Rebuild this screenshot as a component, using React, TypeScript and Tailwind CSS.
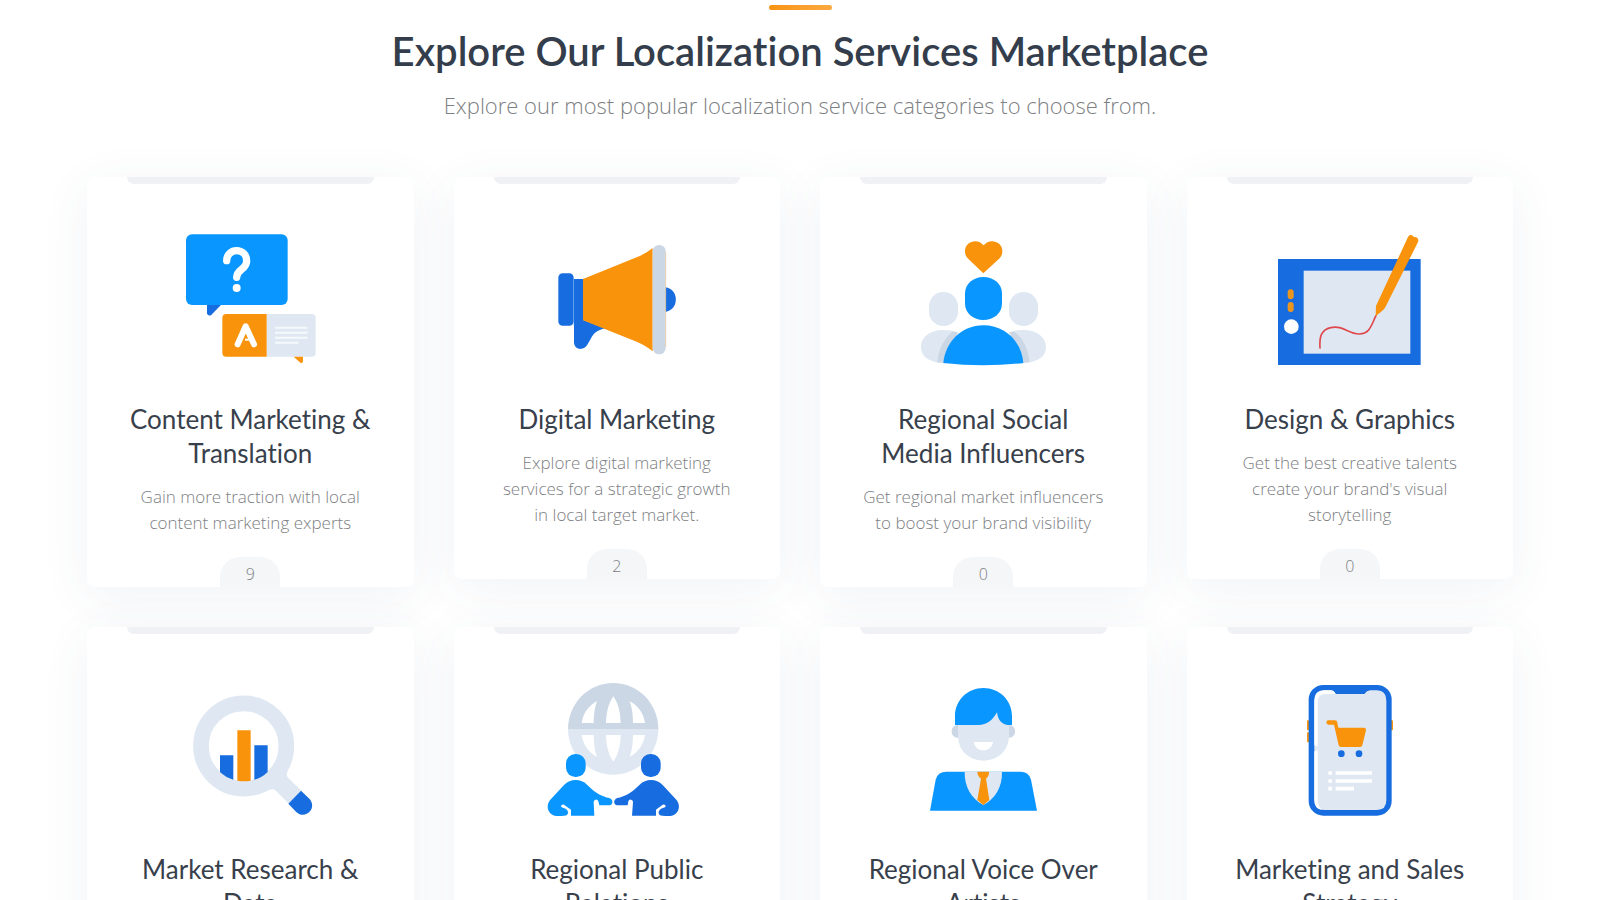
import type { ReactNode } from "react";

interface Service {
  title: string;
  description: string;
  count: number;
  icon: ReactNode;
}

const BLUE = "#0a96ff";
const DARK_BLUE = "#176ddf";
const ORANGE = "#f8930b";
const PALE = "#dfe8f2";
const GREY = "#cbd7e4";

interface IconProps {
  viewBox: string;
  children: ReactNode;
}

function Icon({ viewBox, children }: IconProps) {
  return (
    <svg className="w-[200px] h-40" viewBox={viewBox} fill="none" aria-hidden="true">
      {children}
    </svg>
  );
}

function TranslationIcon() {
  return (
    <Icon viewBox="270 210 600 480">
      <path d="M441 460V490Q443 499 453 496L488 460Z" fill={DARK_BLUE} />
      <rect x="378" y="253" width="305" height="212" rx="18" fill={BLUE} />
      <path
        d="M500 332C500 292 560 292 560 333C560 359 530 357 530 382"
        stroke="white"
        strokeWidth="22"
        strokeLinecap="round"
      />
      <circle cx="530" cy="414" r="12" fill="white" />
      <path d="M620 492H755Q767 492 767 504V608Q767 620 755 620H620Z" fill={PALE} />
      <path d="M620 492H499Q487 492 487 504V608Q487 620 499 620H620Z" fill={ORANGE} />
      <path d="M701 620H729V634Q728 641 721 638Z" fill={ORANGE} />
      <path
        d="M533 583L557 529L582 583"
        stroke="white"
        strokeWidth="18"
        strokeLinecap="round"
        strokeLinejoin="round"
      />
      <path d="M555 569H568" stroke="white" strokeWidth="6" />
      <path d="M645 533H742M645 548H742M645 563H742M645 578H716" stroke="#f6f9fc" strokeWidth="6" />
    </Icon>
  );
}

function MegaphoneIcon() {
  return (
    <Icon viewBox="-9 0 600 480">
      <path d="M436 202C478 207 478 270 436 276Z" fill={DARK_BLUE} />
      <path
        d="M162 177H190V300L256 325C231 331 220 340 212 357L201 376C190 393 162 390 162 366Z"
        fill={DARK_BLUE}
      />
      <rect x="115" y="160" width="46" height="157" rx="13" fill={DARK_BLUE} />
      <path d="M161 177V317" stroke="#5b98e9" strokeWidth="1" />
      <path d="M189 177L350 112Q378 101 398 84V394Q380 378 350 365L189 301Z" fill={ORANGE} />
      <rect x="398" y="75" width="39" height="328" rx="19" fill={GREY} />
      <path d="M437 96V382" stroke="#eec690" strokeWidth="2" />
    </Icon>
  );
}

function InfluencersIcon() {
  return (
    <Icon viewBox="-21 0 600 480">
      <rect x="117" y="216" width="87" height="102" rx="43" fill={PALE} />
      <rect x="357" y="216" width="87" height="102" rx="43" fill={PALE} />
      <path
        d="M160 330C120 330 93 352 93 380C93 410 115 425 160 430H400C445 425 468 410 468 380C468 352 440 330 400 330C384 330 370 332 358 337H203C190 332 176 330 160 330Z"
        fill={PALE}
      />
      <path
        d="M142 427C145 387 162 357 186 335Q196 335 206 339L280 360L354 339Q364 335 374 335C400 357 416 387 418 427L280 432Z"
        fill={GREY}
      />
      <path d="M200 345L212 326H350L362 345Z" fill="white" />
      <path d="M160 429C166 366 214 316 280 316C347 316 395 366 400 429Q280 443 160 429Z" fill={BLUE} />
      <path
        d="M225 221C225 191 250 171 280 171C311 171 336 191 336 221V250C336 281 311 300 280 300C250 300 225 281 225 250Z"
        fill={BLUE}
      />
      <path
        d="M280 160L233 115C222 103 222 83 234 72C249 59 269 61 281 76C292 61 313 59 328 72C340 83 340 103 329 115Z"
        fill={ORANGE}
      />
    </Icon>
  );
}

function TabletIcon() {
  return (
    <Icon viewBox="0 0 600 480">
      <rect x="84" y="117" width="428" height="318" fill={DARK_BLUE} />
      <rect x="161" y="152" width="320" height="249" fill={PALE} />
      <rect x="113" y="208" width="18" height="30" rx="9" fill="#e9961f" />
      <rect x="113" y="246" width="18" height="30" rx="9" fill="#e9961f" />
      <circle cx="124" cy="320" r="22" fill="white" />
      <path
        d="M210 384C208 350 213 330 242 323C278 314 296 343 328 342C361 341 364 314 378 287"
        stroke="#e0484e"
        strokeWidth="5"
        strokeLinecap="round"
      />
      <path
        d="M377 289L378 258L474 51Q478 42 486 46Q490 53 498 51Q508 56 504 66L406 262Q402 269 396 273Z"
        fill={ORANGE}
      />
    </Icon>
  );
}

function ResearchIcon() {
  return (
    <Icon viewBox="-60 0 600 480">
      <path
        d="M298 359Q309 355 316 361L357 401L394 362L354 323Q347 315 353 304L330 290L285 340Z"
        fill={PALE}
      />
      <circle cx="221" cy="228" r="128" stroke={PALE} strokeWidth="47" />
      <path d="M150 256H190V329Q166 322 150 306Z" fill={DARK_BLUE} />
      <path d="M253 226H293V306Q276 323 253 329Z" fill={DARK_BLUE} />
      <path d="M202 181H242V332Q222 335 202 332Z" fill={ORANGE} />
      <path d="M393 362L418 386C429 398 429 413 420 424C409 437 390 438 378 425L355 401Z" fill={DARK_BLUE} />
    </Icon>
  );
}

function RelationsIcon() {
  return (
    <Icon viewBox="-39 0 600 480">
      <path d="M114 178A136 139 0 0 1 385 178Z" fill={GREY} />
      <path d="M114 178C114 252 174 314 250 314C325 314 385 252 385 178Z" fill={PALE} />
      <path d="M114 178C114 101 174 39 250 39C325 39 385 101 385 178Z" fill={GREY} />
      <path d="M228 159C229 123 237 97 250 79C263 97 271 123 272 159Z" fill="white" />
      <path d="M228 195C229 231 237 257 250 275C263 257 271 231 272 195Z" fill="white" />
      <path d="M155 159C159 130 176 107 201 93Q191 121 191 159Z" fill="white" />
      <path d="M345 159C341 130 324 107 299 93Q309 121 309 159Z" fill="white" />
      <path d="M155 195C159 224 176 247 201 261Q191 233 191 195Z" fill="white" />
      <path d="M345 195C341 224 324 247 299 261Q309 233 309 195Z" fill="white" />
      <g fill={BLUE}>
        <rect x="108" y="252" width="59" height="69" rx="28" />
        <path d="M137 330Q157 330 171 344C198 371 217 379 238 384C251 388 250 405 238 406H208L205 394Q203 388 197 389Q191 390 191 396L193 437H123V419L102 404Q94 402 93 409Q94 413 107 416Q119 425 111 435Q107 438 84 438C56 438 44 410 61 389L102 345Q117 330 137 330Z" />
      </g>
      <g fill={DARK_BLUE}>
        <rect x="333" y="252" width="59" height="69" rx="28" />
        <path d="M363 330Q343 330 329 344C302 371 283 379 262 384C249 388 250 405 262 406H293L295 394Q297 388 303 389Q309 390 309 396L306 437H378V419L398 404Q406 402 407 409Q406 413 393 416Q381 425 389 435Q393 438 416 438C444 438 456 410 439 389L398 345Q383 330 363 330Z" />
      </g>
    </Icon>
  );
}

function VoiceIcon() {
  return (
    <Icon viewBox="-51 0 600 480">
      <rect x="155" y="165" width="40" height="38" rx="17" fill={GREY} />
      <rect x="305" y="165" width="40" height="38" rx="17" fill={GREY} />
      <path d="M174 120H327V196C327 242 293 272 250 272C207 272 174 242 174 196Z" fill={PALE} />
      <path
        d="M165 165V138C165 91 203 54 250 54C298 54 336 91 336 138V165H323C305 162 294 151 291 127C278 151 261 165 235 165Z"
        fill={BLUE}
      />
      <path d="M221 216H279C276 232 265 241 250 241C235 241 224 232 221 216Z" fill="white" />
      <path d="M90 422L107 329Q112 305 140 305H361Q387 305 393 329L411 422Z" fill={BLUE} />
      <path d="M194 305H306C307 350 286 386 250 405C214 386 193 350 194 305Z" fill={PALE} />
      <path d="M232 305H267Q268 317 258 326L268 390L250 405L232 390L243 326Q232 317 232 305Z" fill={ORANGE} />
    </Icon>
  );
}

function PhoneIcon() {
  return (
    <Icon viewBox="-90 0 600 480">
      <rect x="81" y="151" width="12" height="30" rx="3" fill={ORANGE} />
      <rect x="81" y="187" width="12" height="30" rx="3" fill={ORANGE} />
      <rect x="327" y="151" width="12" height="30" rx="3" fill={ORANGE} />
      <rect x="86" y="45" width="249" height="392" rx="44" fill={DARK_BLUE} />
      <path
        d="M132 61H152Q162 62 167 72H253Q260 62 271 61H291Q319 62 319 92V391Q319 420 291 420H132Q103 420 103 391V92Q103 62 132 61Z"
        fill={PALE}
      />
      <path
        d="M132 61H152Q162 62 167 72H136Q113 72 113 96V391Q113 412 128 420Q103 418 103 391V245L111 235L103 225V92Q103 62 132 61Z"
        fill="white"
      />
      <path d="M103 235L113 225V245Z" fill={PALE} />
      <path
        d="M145 151H165Q171 151 172 158L175 173H253Q259 174 258 181L247 226Q246 231 240 231H183Q177 231 176 226L162 164H145Q139 163 139 157Q139 151 145 151Z"
        fill={ORANGE}
      />
      <circle cx="184" cy="251" r="10" fill={DARK_BLUE} />
      <circle cx="237" cy="251" r="10" fill={DARK_BLUE} />
      <path
        d="M145 309H156M167 309H276M145 333H156M167 333H276M145 356H156M167 356H222"
        stroke="white"
        strokeWidth="11"
      />
    </Icon>
  );
}

const services: Service[] = [
  {
    title: "Content Marketing & Translation",
    description: "Gain more traction with local content marketing experts",
    count: 9,
    icon: <TranslationIcon />,
  },
  {
    title: "Digital Marketing",
    description: "Explore digital marketing services for a strategic growth in local target market.",
    count: 2,
    icon: <MegaphoneIcon />,
  },
  {
    title: "Regional Social Media Influencers",
    description: "Get regional market influencers to boost your brand visibility",
    count: 0,
    icon: <InfluencersIcon />,
  },
  {
    title: "Design & Graphics",
    description: "Get the best creative talents create your brand's visual storytelling",
    count: 0,
    icon: <TabletIcon />,
  },
  { title: "Market Research & Data", description: "", count: 0, icon: <ResearchIcon /> },
  { title: "Regional Public Relations", description: "", count: 0, icon: <RelationsIcon /> },
  { title: "Regional Voice Over Artists", description: "", count: 0, icon: <VoiceIcon /> },
  { title: "Marketing and Sales Strategy", description: "", count: 0, icon: <PhoneIcon /> },
];

function ServiceCard({ title, description, count, icon }: Service) {
  return (
    <a
      href="#"
      className="flex flex-col items-center rounded-lg bg-white px-10 text-center shadow-[0_10px_50px_rgba(50,80,125,0.07)]"
    >
      <span className="h-[7px] w-full rounded-b-lg bg-[#eff1f5]" />
      <span className="mt-9">{icon}</span>
      <h3 className="mt-[22px] font-[Lato,sans-serif] text-[26px] leading-[34px] text-[#38404c] [font-variant-ligatures:none]">
        {title}
      </h3>
      {description && (
        <p className="mt-[14px] max-w-[244px] font-['Open_Sans',sans-serif] text-[17px] leading-[26px] font-light text-[#7d8083]">
          {description}
        </p>
      )}
      <span className="mt-[21px] flex h-[30px] w-[60px] items-center justify-center rounded-t-[20px] bg-[#f4f6f8] pt-1 font-['Open_Sans',sans-serif] text-base font-light text-[#7d8083]">
        {count}
      </span>
    </a>
  );
}

export default function App() {
  return (
    <main className="h-screen overflow-hidden bg-white">
      <header className="flex flex-col items-center pt-[5px] text-center">
        <span className="h-[5px] w-[63px] rounded-full bg-linear-to-r from-[#f8930b] to-[#fca93f]" />
        <h2 className="mt-4 font-[Lato,sans-serif] text-[40px] leading-[50px] font-semibold text-[#333d4b] [font-variant-ligatures:none]">
          Explore Our Localization Services Marketplace
        </h2>
        <p className="mt-[14px] font-['Open_Sans',sans-serif] text-[22px] leading-[30px] font-light text-[#7d8083]">
          Explore our most popular localization service categories to choose from.
        </p>
      </header>
      <section className="mt-[57px] grid grid-cols-4 items-start gap-10 px-[87px]">
        {services.map((service) => (
          <ServiceCard key={service.title} {...service} />
        ))}
      </section>
    </main>
  );
}
